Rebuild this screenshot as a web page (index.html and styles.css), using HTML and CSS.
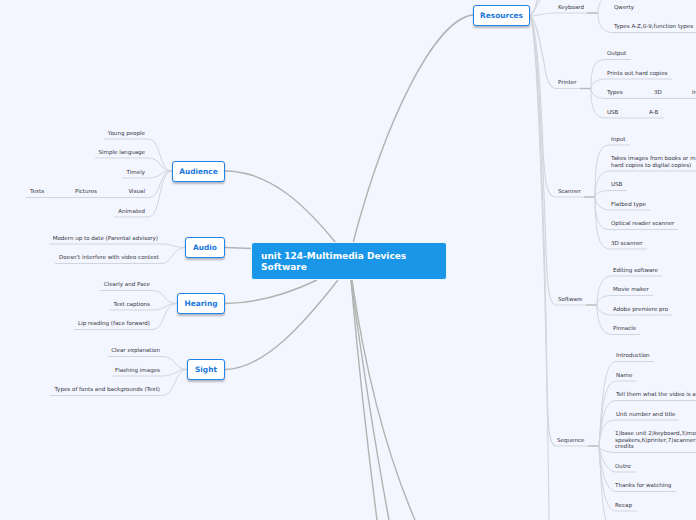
FILE: index.html
```html
<!DOCTYPE html>
<html lang="en">
<head>
<meta charset="utf-8">
<title>unit 124-Multimedia Devices Software</title>
<link rel="stylesheet" href="styles.css">
</head>
<body>
<main class="map">
<svg class="links" width="696" height="520" viewBox="0 0 696 520" aria-hidden="true">
  <g class="main">
    <path d="M225 171C270 171 305 205 336 243"/>
    <path d="M225 247.500L252 248.500"/>
    <path d="M225 303.500C260 303 290 293 317 280"/>
    <path d="M225 369.500C265 369 305 322 338 280"/>
    <path d="M473 15C435 19 385 120 353 243"/>
    <path d="M351 280C358 360 368 450 377 520"/>
    <path d="M351 280C362 360 376 450 389 520"/>
    <path d="M352 280C365 370 385 450 415 520"/>
  </g>
  <g class="trunk">
    <path d="M530 16C534 12 536 6 537 0"/>
    <path d="M530 16C534 14 536 5 540 0"/>
    <path d="M530 16C538 16 544 13 552 13H587"/>
    <path d="M530 16C537 20 541 50 544 62Q547 88.500 556 88.500H580"/>
    <path d="M530 16C537 25 541 100 543 150C545 180 546 197 556 197H584"/>
    <path d="M530 16C537 25 543 160 546 250C547 280 548 305 556 305H586"/>
    <path d="M530 16C537 25 545 220 547 385C548 420 548 446 556 446H588"/>
    <path d="M530 16C537 25 546 260 549 520"/>
  </g>
  <g class="thick">
    <path d="M587 13H598"/><path d="M580 88.500H591"/><path d="M584 197H595"/><path d="M586 305H597"/><path d="M588 446H599"/>
  </g>
  <g class="leaf">
    <path d="M172 171C158 171 162 139 148 139H104"/>
    <path d="M172 171C158 171 162 158 148 158H95"/>
    <path d="M172 171C158 171 162 178 148 178H122"/>
    <path d="M172 171C158 171 162 197.500 148 197.500H26"/>
    <path d="M172 171C158 171 162 217 148 217H114"/>
    <path d="M185 247.500C172 247 172 244 162 244H49"/>
    <path d="M185 247.500C172 248 172 263.500 162 263.500H55"/>
    <path d="M177 303.500C162 303 166 290.500 152 290.500H100"/>
    <path d="M177 303.500C166 303 166 310 152 310H109"/>
    <path d="M177 303.500C162 304 166 329.500 152 329.500H74"/>
    <path d="M187 369.500C174 369 176 356.500 162 356.500H108"/>
    <path d="M187 369.500C176 369 176 376 162 376H112"/>
    <path d="M187 369.500C174 370 176 395.500 162 395.500H50"/>
    <path d="M598 13C598 6 600 2 604 -3"/>
    <path d="M598 13C598 24 602 32.500 612 32.500H696"/>
    <path d="M591 88.500C591 68 594 59.500 606 59.500H631"/>
    <path d="M591 88.500C591 84 596 79 606 79H672"/>
    <path d="M591 88.500C591 94 596 98.500 606 98.500H696"/>
    <path d="M591 88.500C591 108 594 118 606 118H664"/>
    <path d="M595 197C595 160 598 145 610 145H630"/>
    <path d="M595 197C595 182 600 171 610 171H696"/>
    <path d="M595 197C595 194 600 190.500 610 190.500H627"/>
    <path d="M595 197C595 202 600 210 610 210H650"/>
    <path d="M595 197C595 218 598 229.500 610 229.500H678"/>
    <path d="M595 197C595 230 598 249 610 249H647"/>
    <path d="M597 305C597 288 602 276 612 276H662"/>
    <path d="M597 305C597 300 602 295.500 612 295.500H653"/>
    <path d="M597 305C597 310 602 315 612 315H672"/>
    <path d="M597 305C597 322 602 334.500 612 334.500H640"/>
    <path d="M599 446C602 400 604 361.500 616 361.500H654"/>
    <path d="M599 446C602 410 604 381 616 381H636"/>
    <path d="M599 446C602 420 604 400.500 616 400.500H696"/>
    <path d="M599 446C600 430 604 420 616 420H679"/>
    <path d="M599 446C600 450 606 452.500 616 452.500H696"/>
    <path d="M599 446C601 456 606 472 616 472H636"/>
    <path d="M599 446C601 470 606 491.500 616 491.500H676"/>
    <path d="M599 446C601 480 604 511 616 511H637"/>
    <path d="M599 446C601 480 602 505 606 521"/>
  </g>
</svg>

<h1 class="root">unit 124-Multimedia Devices Software</h1>

<div class="topic t-audience">Audience</div>
<div class="topic t-audio">Audio</div>
<div class="topic t-hearing">Hearing</div>
<div class="topic t-sight">Sight</div>
<div class="topic t-resources">Resources</div>

<span class="leaf-text a1">Young people</span>
<span class="leaf-text a2">Simple language</span>
<span class="leaf-text a3">Timely</span>
<span class="leaf-text a4">Visual</span>
<span class="leaf-text a5">Pictures</span>
<span class="leaf-text a6">Texts</span>
<span class="leaf-text a7">Animated</span>
<span class="leaf-text b1">Modern up to date (Parental advisory)</span>
<span class="leaf-text b2">Doesn't interfere with video context</span>
<span class="leaf-text c1">Clearly and Pace</span>
<span class="leaf-text c2">Text captions</span>
<span class="leaf-text c3">Lip reading (face forward)</span>
<span class="leaf-text d1">Clear explanation</span>
<span class="leaf-text d2">Flashing images</span>
<span class="leaf-text d3">Types of fonts and backgrounds (Text)</span>

<span class="leaf-text k0">Keyboard</span>
<span class="leaf-text k1">Qwerty</span>
<span class="leaf-text k2">Types A-Z,0-9,function types</span>
<span class="leaf-text p0">Printer</span>
<span class="leaf-text p1">Output</span>
<span class="leaf-text p2">Prints out hard copies</span>
<span class="leaf-text p3">Types</span>
<span class="leaf-text p4">3D</span>
<span class="leaf-text p5">In</span>
<span class="leaf-text p6">USB</span>
<span class="leaf-text p7">A-B</span>
<span class="leaf-text s0">Scanner</span>
<span class="leaf-text s1">Input</span>
<span class="leaf-text s2">Takes images from books or m<br>hard copies to digital copies)</span>
<span class="leaf-text s3">USB</span>
<span class="leaf-text s4">Flatbed type</span>
<span class="leaf-text s5">Optical reader scanner</span>
<span class="leaf-text s6">3D scanner</span>
<span class="leaf-text w0">Software</span>
<span class="leaf-text w1">Editing software</span>
<span class="leaf-text w2">Movie maker</span>
<span class="leaf-text w3">Adobe premiere pro</span>
<span class="leaf-text w4">Pinnacle</span>
<span class="leaf-text q0">Sequence</span>
<span class="leaf-text q1">Introduction</span>
<span class="leaf-text q2">Name</span>
<span class="leaf-text q3">Tell them what the video is al</span>
<span class="leaf-text q4">Unit number and title</span>
<span class="leaf-text q5">1)base unit 2)keyboard,3)mo<br>speakers,6)printer,7)scanner,<br>credits</span>
<span class="leaf-text q6">Outro</span>
<span class="leaf-text q7">Thanks for watching</span>
<span class="leaf-text q8">Recap</span>
</main>
</body>
</html>
```

FILE: styles.css
```css
html, body {
  margin: 0;
  padding: 0;
  background: #f4f6ff;
  overflow: hidden;
}
.map {
  position: relative;
  width: 696px;
  height: 520px;
  overflow: hidden;
  font-family: "DejaVu Sans", sans-serif;
}
.links { position: absolute; left: 0; top: 0; }
.links path { fill: none; }
.main path { stroke: #b2b2b2; stroke-width: 1.4; }
.trunk path { stroke: #d4d6dc; stroke-width: 1.2; }
.thick path { stroke: #b8b8b8; stroke-width: 1.4; }
.leaf path { stroke: #d2d5dd; stroke-width: 1; }

.root {
  position: absolute;
  left: 251px;
  top: 242px;
  width: 196px;
  height: 38px;
  box-sizing: border-box;
  margin: 0;
  padding: 8px 10px 0 9px;
  background: #1a96e8;
  border: 1px solid #eaf4ff;
  border-radius: 3px;
  color: #fff;
  font-size: 9px;
  font-weight: 700;
  line-height: 11px;
}
.topic {
  position: absolute;
  height: 21px;
  box-sizing: border-box;
  display: flex;
  align-items: center;
  justify-content: center;
  background: #fff;
  border: 1.500px solid #2285e6;
  border-radius: 3px;
  box-shadow: 0 1.500px 2px rgba(60, 70, 90, .35);
  color: #1a78dc;
  font-size: 7.400px;
  font-weight: 700;
}
.t-audience { left: 172px; top: 161px; width: 53px; }
.t-audio { left: 185px; top: 237px; width: 40px; }
.t-hearing { left: 177px; top: 293px; width: 48px; }
.t-sight { left: 187px; top: 359px; width: 38px; }
.t-resources { left: 473px; top: 5px; width: 57px; }

.leaf-text {
  position: absolute;
  color: #33333c;
  font-size: 5.550px;
  line-height: 6.600px;
  white-space: nowrap;
}
.a1 { right: 551px; top: 130px; }
.a2 { right: 551px; top: 149px; }
.a3 { right: 551px; top: 169px; }
.a4 { right: 551px; top: 188px; }
.a5 { left: 75px; top: 188px; }
.a6 { left: 30px; top: 188px; }
.a7 { right: 551px; top: 208px; }
.b1 { right: 538px; top: 235px; }
.b2 { right: 537px; top: 254px; }
.c1 { right: 546px; top: 281px; }
.c2 { right: 546px; top: 301px; }
.c3 { right: 546px; top: 320px; }
.d1 { right: 536px; top: 347px; }
.d2 { right: 536px; top: 367px; }
.d3 { right: 536px; top: 386px; }
.k0 { left: 558px; top: 4px; }
.k1 { left: 614px; top: 4px; }
.k2 { left: 614px; top: 23px; }
.p0 { left: 558px; top: 79px; }
.p1 { left: 607px; top: 50px; }
.p2 { left: 607px; top: 70px; }
.p3 { left: 607px; top: 89px; }
.p4 { left: 654px; top: 89px; }
.p5 { left: 692px; top: 89px; }
.p6 { left: 607px; top: 109px; }
.p7 { left: 649px; top: 109px; }
.s0 { left: 558px; top: 188px; }
.s1 { left: 611px; top: 136px; }
.s2 { left: 611px; top: 155px; }
.s3 { left: 611px; top: 181px; }
.s4 { left: 611px; top: 201px; }
.s5 { left: 611px; top: 220px; }
.s6 { left: 611px; top: 240px; }
.w0 { left: 558px; top: 296px; }
.w1 { left: 613px; top: 267px; }
.w2 { left: 613px; top: 286px; }
.w3 { left: 613px; top: 306px; }
.w4 { left: 613px; top: 325px; }
.q0 { left: 557px; top: 437px; }
.q1 { left: 616px; top: 352px; }
.q2 { left: 616px; top: 372px; }
.q3 { left: 616px; top: 391px; }
.q4 { left: 616px; top: 411px; }
.q5 { left: 615px; top: 430px; }
.q6 { left: 615px; top: 463px; }
.q7 { left: 615px; top: 482px; }
.q8 { left: 615px; top: 502px; }
```
